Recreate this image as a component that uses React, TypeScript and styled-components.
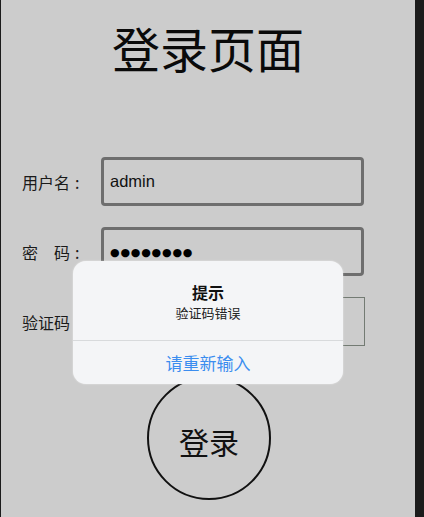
import React from "react";
import styled, { createGlobalStyle } from "styled-components";

const Global = createGlobalStyle`
  html, body { margin: 0; padding: 0; background: #1b1b1b; }
  body { font-family: "Noto Sans CJK SC", "Liberation Sans", sans-serif; }
`;

const Frame = styled.div`
  display: flex;
  width: 424px;
  height: 517px;
  overflow: hidden;
  background: #1b1b1b;
`;

const Screen = styled.div`
  position: relative;
  margin-left: 1px;
  width: 414px;
  height: 517px;
  background: #cccccc;
  display: flex;
  flex-direction: column;
  align-items: center;
`;

const Title = styled.h1`
  margin: 0;
  padding-top: 22px;
  height: 50px;
  line-height: 50px;
  font-size: 48px;
  font-weight: 400;
  color: #0a0a0a;
  font-family: "Noto Sans CJK SC", sans-serif;
`;

const Form = styled.div`
  align-self: stretch;
  margin-top: 85px;
  display: flex;
  flex-direction: column;
  gap: 21px;
`;

const Row = styled.div`
  display: flex;
  align-items: center;
  height: 49px;
`;

const Label = styled.div`
  flex: 0 0 100px;
  padding-left: 21px;
  box-sizing: border-box;
  font-size: 16px;
  color: #1a1a1a;
  white-space: pre;
  font-family: "Noto Sans CJK SC", sans-serif;
`;

const Colon = styled.span`
  margin-left: 5px;
`;

const Field = styled.div<{ $thin?: boolean; $width: number }>`
  box-sizing: border-box;
  flex: 0 0 ${(p) => p.$width}px;
  height: 49px;
  border: ${(p) => (p.$thin ? "1.5px solid #737b73" : "3px solid #6e6e6e")};
  border-radius: ${(p) => (p.$thin ? "0" : "4px")};
  display: flex;
  align-items: center;
  padding-left: 6px;
  font-family: "Liberation Sans", Arial, sans-serif;
  font-size: 16.5px;
  color: #111;
`;

const Dots = styled.span`
  font-family: "DejaVu Sans", sans-serif;
  font-size: 11px;
  letter-spacing: 0.8px;
  color: #000;
  padding-top: 2px;
`;

const CaptchaSpacer = styled.div`
  flex: 0 0 201px;
`;

const LoginButton = styled.button`
  margin-top: 30px;
  width: 124px;
  height: 124px;
  border-radius: 50%;
  border: 2px solid #111;
  background: transparent;
  font-family: "Noto Sans CJK SC", sans-serif;
  font-size: 30px;
  color: #111;
  padding: 6px 0 0 0;
  margin-left: 2px;
`;

const Dialog = styled.div`
  position: absolute;
  left: 72px;
  top: 261px;
  width: 270px;
  height: 123px;
  border-radius: 13px;
  background: #f4f5f7;
  box-shadow: 0 0 2px rgba(255, 255, 255, 0.6);
  display: flex;
  flex-direction: column;
  overflow: hidden;
`;

const DialogBody = styled.div`
  height: 79px;
  display: flex;
  flex-direction: column;
  align-items: center;
  padding-top: 20px;
  box-sizing: border-box;
`;

const DialogTitle = styled.div`
  font-size: 16px;
  line-height: 22px;
  font-weight: 700;
  color: #111;
`;

const DialogMessage = styled.div`
  font-size: 13px;
  line-height: 18px;
  color: #222;
  margin-top: 1px;
`;

const Divider = styled.div`
  height: 1px;
  background: #d8dadc;
`;

const DialogAction = styled.div`
  flex: 1;
  display: flex;
  align-items: center;
  justify-content: center;
  font-size: 17px;
  color: #3b8def;
  padding-bottom: 1px;
`;

export default function App() {
  return (
    <Frame>
      <Global />
      <Screen>
        <Title>登录页面</Title>
        <Form>
          <Row>
            <Label>
              用户名<Colon>:</Colon>
            </Label>
            <Field $width={263}>admin</Field>
          </Row>
          <Row>
            <Label>
              {"密　码"}
              <Colon>:</Colon>
            </Label>
            <Field $width={263}>
              <Dots>●●●●●●●●</Dots>
            </Field>
          </Row>
          <Row>
            <Label>验证码</Label>
            <CaptchaSpacer />
            <Field $thin $width={63} />
          </Row>
        </Form>
        <LoginButton>登录</LoginButton>
        <Dialog>
          <DialogBody>
            <DialogTitle>提示</DialogTitle>
            <DialogMessage>验证码错误</DialogMessage>
          </DialogBody>
          <Divider />
          <DialogAction>请重新输入</DialogAction>
        </Dialog>
      </Screen>
    </Frame>
  );
}
